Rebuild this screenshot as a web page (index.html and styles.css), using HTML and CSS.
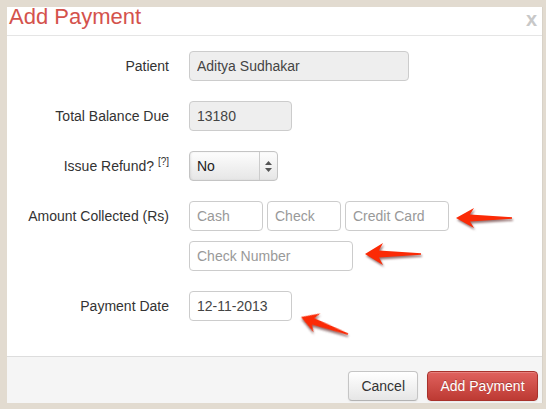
FILE: index.html
```html
<!DOCTYPE html>
<html lang="en">
<head>
    <meta charset="UTF-8">
    <meta name="viewport" content="width=device-width, initial-scale=1.0">
    <title>Add Payment</title>
    <link rel="stylesheet" href="styles.css">
</head>
<body>
    <div class="modal">
        <div class="modal-header">
            <h3>Add Payment</h3>
            <span class="close">x</span>
        </div>

        <div class="modal-body">
            <div class="form-row">
                <label>Patient</label>
                <input type="text" class="input-wide" value="Aditya Sudhakar" readonly>
            </div>

            <div class="form-row">
                <label>Total Balance Due</label>
                <input type="text" class="input-small" value="13180" readonly>
            </div>

            <div class="form-row">
                <label>Issue Refund? <sup>[?]</sup></label>
                <div class="select-box">
                    <span class="select-value">No</span>
                    <span class="select-arrows">
                        <svg width="7" height="11" viewBox="0 0 7 11">
                            <path d="M3.5 0 L7 4 L0 4 Z M3.5 11 L7 7 L0 7 Z" fill="#555"/>
                        </svg>
                    </span>
                </div>
            </div>

            <div class="form-row multi">
                <label>Amount Collected (Rs)</label>
                <div class="controls">
                    <div class="inline-inputs">
                        <input type="text" class="input-mini" placeholder="Cash">
                        <input type="text" class="input-mini" placeholder="Check">
                        <input type="text" class="input-card" placeholder="Credit Card">
                    </div>
                    <input type="text" class="input-number" placeholder="Check Number">
                </div>
            </div>

            <div class="form-row">
                <label>Payment Date</label>
                <input type="text" class="input-small" value="12-11-2013">
            </div>
        </div>

        <div class="modal-footer">
            <button class="btn">Cancel</button>
            <button class="btn btn-danger">Add Payment</button>
        </div>
    </div>

    <!-- annotation arrows -->
    <svg class="arrow arrow-card" width="56" height="20" viewBox="0 0 56 20">
        <path d="M0 10 L18 0 L14 6.5 L56 9.2 L56 10.8 L14 13.5 L18 20 Z"/>
    </svg>
    <svg class="arrow arrow-number" width="56" height="22" viewBox="0 0 56 22">
        <path d="M0 11 L18 0 L14 7.5 L56 10.2 L56 11.8 L14 14.5 L18 22 Z"/>
    </svg>
    <svg class="arrow arrow-date" width="50" height="20" viewBox="0 0 50 20">
        <path d="M0 10 L17 0 L13 6.5 L50 9.2 L50 10.8 L13 13.5 L17 20 Z"/>
    </svg>
</body>
</html>
```

FILE: styles.css
```css
body {
    margin: 0;
    background-color: #e2dbd0;
    font-family: "Liberation Sans", Arial, Helvetica, sans-serif;
    font-size: 14px;
    color: #333;
    height: 409px;
    overflow: hidden;
}

.modal {
    margin: 7px 3px 0 7px;
    background-color: #fff;
    border-right: 1px solid #d8d2c8;
}

.modal-header {
    display: flex;
    justify-content: space-between;
    align-items: flex-start;
    padding: 0 5px 8px 2px;
    border-bottom: 1px solid #e5e5e5;
}

.modal-header h3 {
    margin: 0;
    font-size: 22px;
    font-weight: normal;
    line-height: 20px;
    color: #d4524c;
}

.close {
    margin-top: 4px;
    font-size: 20px;
    font-weight: bold;
    line-height: 16px;
    color: #c8c8c8;
}

.modal-body {
    padding: 15px 0 35px 0;
}

.form-row {
    display: flex;
    align-items: center;
    margin-bottom: 20px;
}

.form-row:last-child {
    margin-bottom: 0;
}

.form-row.multi {
    align-items: flex-start;
}

.form-row label {
    width: 162px;
    margin-right: 20px;
    text-align: right;
    line-height: 30px;
}

.form-row sup {
    font-size: 10px;
    line-height: 0;
    vertical-align: 6px;
}

.controls {
    display: flex;
    flex-direction: column;
    gap: 10px;
}

.inline-inputs {
    display: flex;
    gap: 4px;
}

input {
    box-sizing: border-box;
    height: 30px;
    margin: 0;
    padding: 0 7px;
    font-family: inherit;
    font-size: 14px;
    color: #444;
    background-color: #fff;
    border: 1px solid #ccc;
    border-radius: 4px;
    outline: none;
}

input::placeholder {
    color: #999;
}

input[readonly] {
    background-color: #eee;
}

.input-wide {
    width: 220px;
}

.input-small {
    width: 103px;
}

.input-mini {
    width: 74px;
}

.input-card {
    width: 104px;
}

.input-number {
    width: 164px;
}

.select-box {
    box-sizing: border-box;
    display: flex;
    width: 89px;
    height: 30px;
    border: 1px solid #c4c4c4;
    border-radius: 4px;
    background: linear-gradient(to bottom, #fdfdfd, #e6e6e6);
    box-shadow: inset 1px 0 2px rgba(0, 0, 0, 0.08);
}

.select-value {
    flex: 1;
    padding-left: 7px;
    line-height: 28px;
    color: #222;
}

.select-arrows {
    display: flex;
    align-items: center;
    justify-content: center;
    width: 17px;
    border-left: 1px solid #ccc;
}

.modal-footer {
    display: flex;
    justify-content: flex-end;
    gap: 9px;
    padding: 14px 4px 2px 0;
    background-color: #f5f5f5;
    border-top: 1px solid #ddd;
}

.btn {
    box-sizing: border-box;
    height: 30px;
    padding: 0 12px;
    font-family: inherit;
    font-size: 14px;
    color: #333;
    background: linear-gradient(to bottom, #ffffff, #e6e6e6);
    border: 1px solid #c5c5c5;
    border-bottom-color: #b3b3b3;
    border-radius: 4px;
    box-shadow: inset 0 1px 0 rgba(255, 255, 255, 0.2), 0 1px 2px rgba(0, 0, 0, 0.05);
    cursor: pointer;
}

.btn-danger {
    width: 111px;
    color: #fff;
    background: linear-gradient(to bottom, #e0625e, #bd3a33);
    border-color: #a8322c;
    text-shadow: 0 -1px 0 rgba(0, 0, 0, 0.25);
}

.arrow {
    position: absolute;
    fill: #fb2a06;
    filter: drop-shadow(1px 2px 1px rgba(60, 0, 0, 0.55));
}

.arrow-card {
    left: 456px;
    top: 208px;
}

.arrow-number {
    left: 365px;
    top: 243px;
}

.arrow-date {
    left: 301px;
    top: 307px;
    transform-origin: 0 10px;
    transform: rotate(20deg);
}
```
